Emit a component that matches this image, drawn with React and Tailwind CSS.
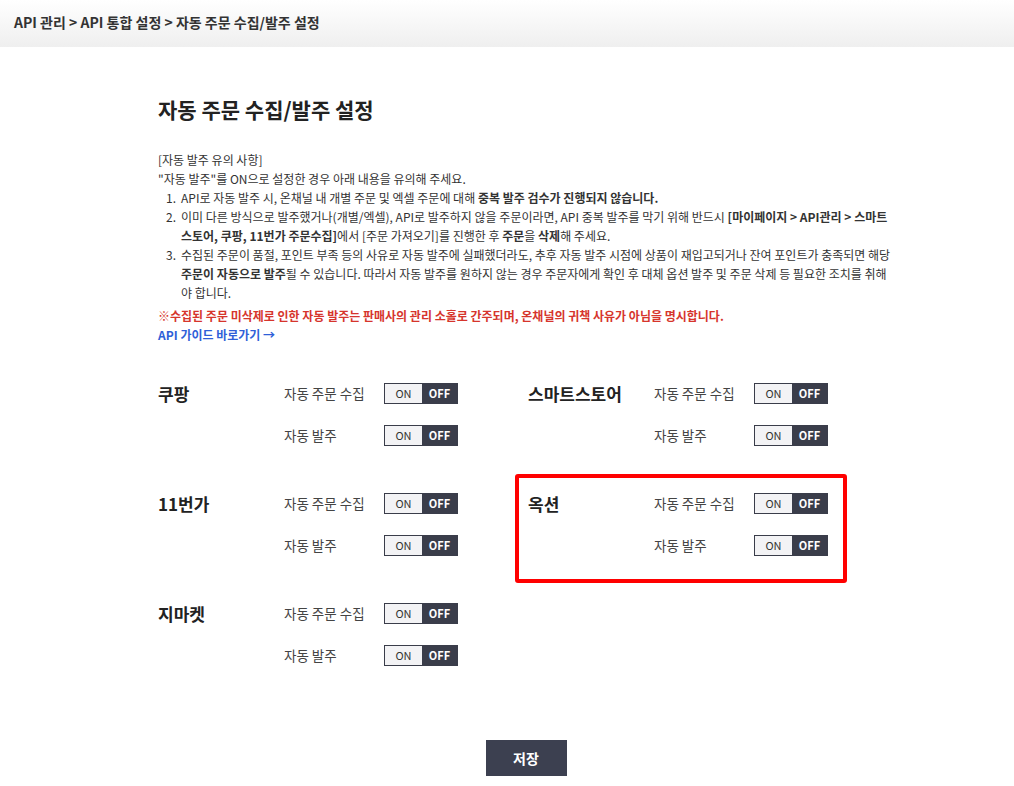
import React, { useState } from "react";

const FONT = "font-['Noto_Sans_CJK_KR','Noto_Sans',sans-serif]";

const Toggle = ({ value, onChange }) => (
  <div className="flex h-[21px] w-[74px] border border-[#3a3d4a] text-[11px] leading-none">
    <button
      onClick={() => onChange(true)}
      className={`flex w-[37px] items-center justify-center ${value ? "bg-[#3a3d4a] font-bold text-white" : "bg-[#f3f3f5] text-[#333]"}`}
    >
      ON
    </button>
    <button
      onClick={() => onChange(false)}
      className={`flex flex-1 items-center justify-center ${!value ? "bg-[#3a3d4a] font-bold text-white" : "bg-[#f3f3f5] text-[#333]"}`}
    >
      OFF
    </button>
  </div>
);

const SettingRow = ({ label }) => {
  const [on, setOn] = useState(false);
  return (
    <div className="flex h-[21px] items-center">
      <span className="w-[100px] text-[13.5px] text-[#444]">{label}</span>
      <Toggle value={on} onChange={setOn} />
    </div>
  );
};

const Platform = ({ name, highlight }) => (
  <div className="relative flex w-[300px]">
    {/* red highlight box */}
    {highlight && (
      <div className="pointer-events-none absolute -top-[19px] -bottom-[27px] -left-[13px] -right-[19px] rounded-[3px] border-4 border-[#ff0000]" />
    )}
    <div className="flex h-[21px] w-[126px] items-center text-[17px] font-bold text-[#222]">{name}</div>
    <div className="flex flex-col gap-[21px]">
      <SettingRow label="자동 주문 수집" />
      <SettingRow label="자동 발주" />
    </div>
  </div>
);

export default function App() {
  return (
    <div className={`min-h-screen bg-white text-[#333] ${FONT}`}>
      {/* BREADCRUMB */}
      <header className="flex h-[47px] items-start bg-gradient-to-b from-white to-[#efefef] px-[14px] pt-[12px] text-[14px] font-bold text-[#333]">
        API 관리 &gt; API 통합 설정 &gt; 자동 주문 수집/발주 설정
      </header>

      <main className="pl-[158px] pt-[48px]">
        <h1 className="text-[21px] font-bold leading-[28px] text-[#222]">자동 주문 수집/발주 설정</h1>

        {/* NOTICE */}
        <div className="mt-[27px] w-[735px] text-[12px] leading-[19px] text-[#333]">
          <p>[자동 발주 유의 사항]</p>
          <p>"자동 발주"를 ON으로 설정한 경우 아래 내용을 유의해 주세요.</p>
          <ol>
            <li className="flex">
              <span className="w-[23px] shrink-0 pl-[8px]">1.</span>
              <span>
                API로 자동 발주 시, 온채널 내 개별 주문 및 엑셀 주문에 대해 <b>중복 발주 검수가 진행되지 않습니다.</b>
              </span>
            </li>
            <li className="flex">
              <span className="w-[23px] shrink-0 pl-[8px]">2.</span>
              <span>
                이미 다른 방식으로 발주했거나(개별/엑셀), API로 발주하지 않을 주문이라면, API 중복 발주를 막기 위해 반드시{" "}
                <b>[마이페이지 &gt; API관리 &gt; 스마트스토어, 쿠팡, 11번가 주문수집]</b>에서 [주문 가져오기]를 진행한 후{" "}
                <b>주문</b>을 <b>삭제</b>해 주세요.
              </span>
            </li>
            <li className="flex">
              <span className="w-[23px] shrink-0 pl-[8px]">3.</span>
              <span>
                수집된 주문이 품절, 포인트 부족 등의 사유로 자동 발주에 실패했더라도, 추후 자동 발주 시점에 상품이 재입고되거나 잔여
                포인트가 충족되면 해당 <b>주문이 자동으로 발주</b>될 수 있습니다. 따라서 자동 발주를 원하지 않는 경우 주문자에게 확인 후
                대체 옵션 발주 및 주문 삭제 등 필요한 조치를 취해야 합니다.
              </span>
            </li>
          </ol>
          <p className="mt-[4px] font-bold text-[#d6352c]">
            ※수집된 주문 미삭제로 인한 자동 발주는 판매사의 관리 소홀로 간주되며, 온채널의 귀책 사유가 아님을 명시합니다.
          </p>
          <a href="#" className="font-bold text-[#2f5fd8]">
            API 가이드 바로가기 →
          </a>
        </div>

        {/* PLATFORMS */}
        <div className="mt-[39px] grid grid-cols-[370px_300px] gap-y-[47px]">
          <Platform name="쿠팡" />
          <Platform name="스마트스토어" />
          <Platform name="11번가" />
          <Platform name="옥션" highlight />
          <Platform name="지마켓" />
        </div>

        {/* SAVE */}
        <div className="flex w-[736px] justify-center pt-[74px] pb-[10px]">
          <button className="h-[36px] w-[81px] bg-[#3c4050] text-[14px] font-bold text-white">저장</button>
        </div>
      </main>
    </div>
  );
}
